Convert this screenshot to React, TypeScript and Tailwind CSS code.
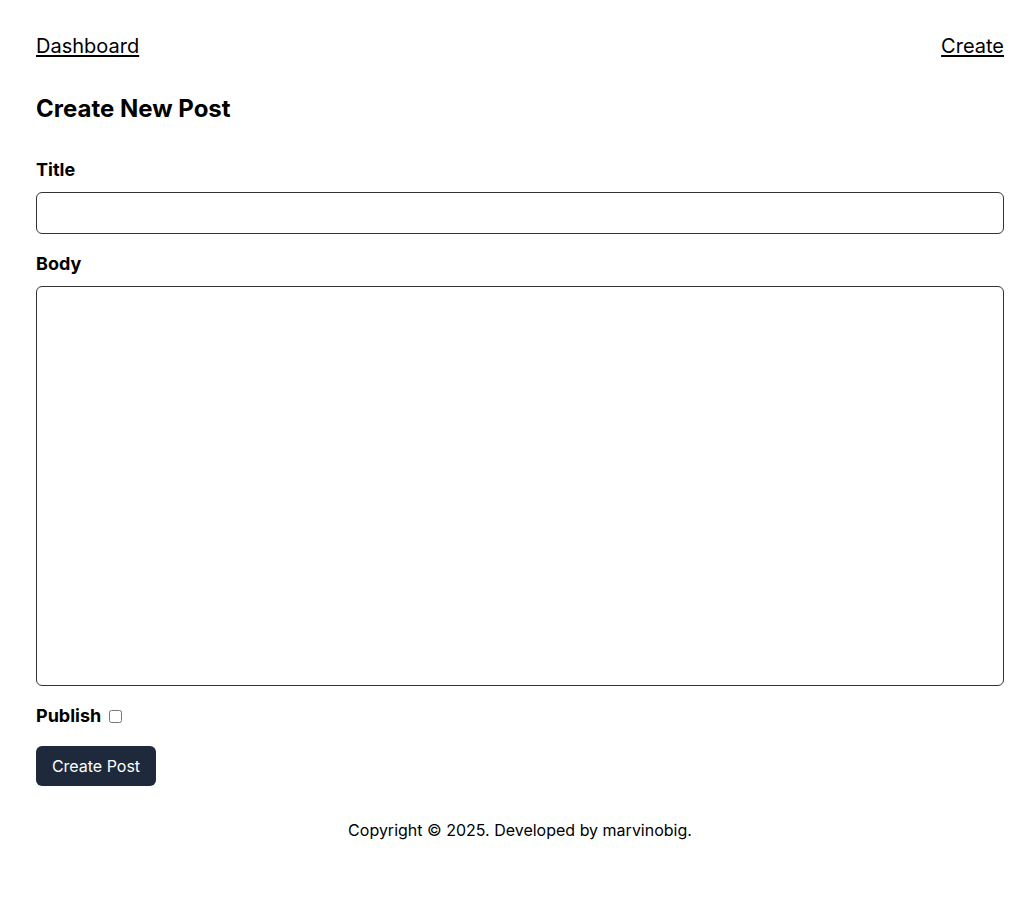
import React from "react";

export default function App() {
  return (
    <div
      className="min-h-screen bg-white text-black"
      style={{ fontFamily: "Inter, 'Noto Sans', sans-serif" }}
    >
      <div className="pl-9 pr-[23px] pt-8">
        <nav className="flex items-center justify-between text-xl leading-7">
          <a href="#" className="underline underline-offset-2">Dashboard</a>
          <a href="#" className="underline underline-offset-2">Create</a>
        </nav>
        <h1 className="mt-[33px] text-2xl leading-8 font-bold">Create New Post</h1>
        <form className="mt-[31px] flex flex-col">
          <label className="text-lg leading-7 font-bold">Title</label>
          <input
            type="text"
            className="mt-[8px] h-[42px] w-full rounded-md border border-[#333] px-3"
          />
          <label className="mt-[16px] text-lg leading-7 font-bold">Body</label>
          <textarea className="mt-[8px] h-[400px] w-full resize-none rounded-md border border-[#333] p-3" />
          <div className="mt-[16px] flex items-center gap-2">
            <label className="text-lg leading-7 font-bold">Publish</label>
            <input type="checkbox" className="h-[13px] w-[13px]" />
          </div>
          <div className="mt-[16px]">
            <button
              type="button"
              className="h-10 w-[120px] rounded-md bg-[#1e293b] text-base text-white"
            >
              Create Post
            </button>
          </div>
        </form>
        <footer className="mt-8 text-center text-base leading-6">
          Copyright © 2025. Developed by marvinobig.
        </footer>
      </div>
    </div>
  );
}
